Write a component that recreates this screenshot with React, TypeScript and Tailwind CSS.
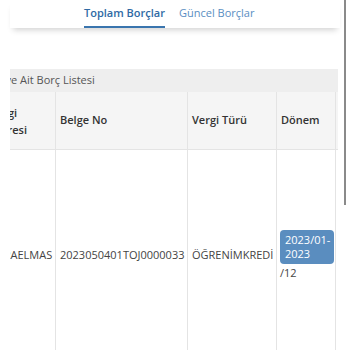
export default function App() {
  return (
    <div className="relative w-[350px] h-[350px] overflow-hidden bg-white font-['Open_Sans',sans-serif]">
      {/* Tabs */}
      <div className="mx-[10px] h-[28px] bg-white shadow-[0_5px_6px_-3px_rgba(0,0,0,0.18)] flex items-stretch gap-[14px] pl-[74px]">
        <div className="flex items-center h-full border-b-2 border-[#3a75ae] text-[11px] font-semibold text-[#2f6aa4]">
          Toplam Borçlar
        </div>
        <div className="flex items-center h-full pb-[2px] text-[11px] text-[#5a8ec2]">Güncel Borçlar</div>
      </div>

      {/* Panel */}
      <div className="mt-[41px] ml-[10px] w-[328px] overflow-hidden">
        <div className="-ml-[24px] w-[410px]">
          <div className="h-[23px] bg-[#eeeeee] flex items-center overflow-hidden whitespace-nowrap">
            <span className="-ml-[31px] text-[11px] text-[#555]">Şahsınıza ve Ait Borç Listesi</span>
          </div>
          <div className="grid grid-cols-[70px_132px_89px_59px_60px] text-[11px] text-[#333]">
            <div className="h-[58px] bg-[#f5f5f5] border-r border-b border-[#e4e4e4] flex items-center px-1 leading-[17px] font-semibold">
              Vergi Dairesi
            </div>
            <div className="h-[58px] bg-[#f5f5f5] border-r border-b border-[#e4e4e4] flex items-center px-1 font-semibold">
              Belge No
            </div>
            <div className="h-[58px] bg-[#f5f5f5] border-r border-b border-[#e4e4e4] flex items-center px-1 font-semibold">
              Vergi Türü
            </div>
            <div className="h-[58px] bg-[#f5f5f5] border-r border-b border-[#e4e4e4] flex items-center px-1 font-semibold">
              Dönem
            </div>
            <div className="h-[58px] bg-[#f5f5f5] border-b border-[#e4e4e4]" />

            <div className="h-[210px] border-r border-[#e4e4e4] flex items-center px-1 text-[#444]">KARAELMAS</div>
            <div className="h-[210px] border-r border-[#e4e4e4] flex items-center px-1 text-[#444]">2023050401TOJ0000033</div>
            <div className="h-[210px] border-r border-[#e4e4e4] flex items-center px-1 text-[#444]">ÖĞRENİMKREDİ</div>
            <div className="h-[210px] border-r border-[#e4e4e4] flex flex-col justify-center px-[3px] text-[#444] leading-[14px]">
              <span className="w-[54px] rounded-[4px] bg-[#5a8dbf] text-white px-[5px] py-[3px]">2023/01-2023</span>
              <span className="mt-[2px]">/12</span>
            </div>
            <div className="h-[210px]" />
          </div>
        </div>
      </div>

      {/* scrollbar */}
      <div className="absolute left-[344px] top-0 w-[2px] h-[205px] bg-[#8a8a8a]" />
    </div>
  );
}
